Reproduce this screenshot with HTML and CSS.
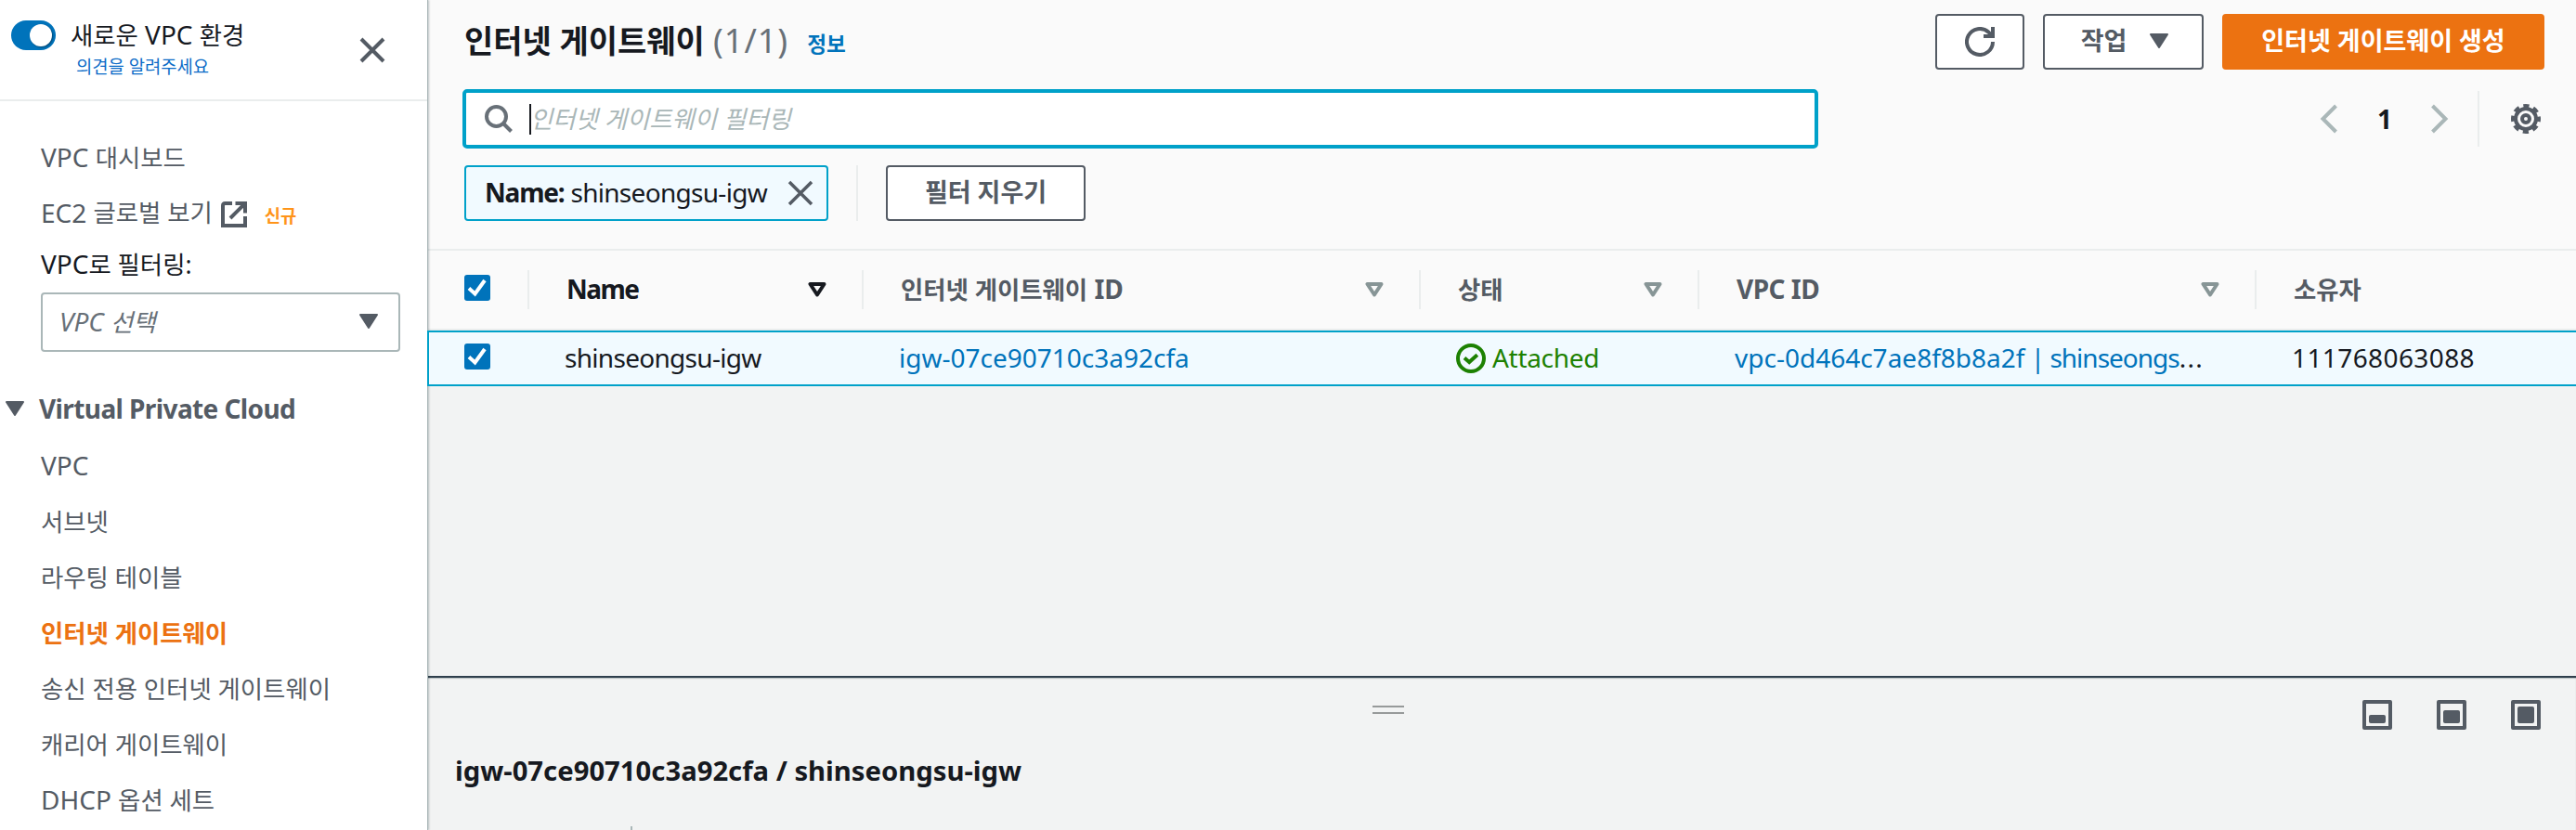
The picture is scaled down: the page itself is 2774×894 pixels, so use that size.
FILE: index.html
```html
<!DOCTYPE html>
<html lang="ko">
<head>
<meta charset="utf-8">
<title>인터넷 게이트웨이 | VPC</title>
<link rel="stylesheet" href="styles.css">
</head>
<body>
<div class="app">
  <aside class="sidebar">
    <header class="side-head">
      <span class="toggle"><span class="knob"></span></span>
      <div class="side-title">
        <div class="exp"><i class="ko">새로운</i> VPC <i class="ko">환경</i></div>
        <a class="feedback ko">의견을 알려주세요</a>
      </div>
      <svg class="close" viewBox="0 0 28 28" width="28" height="28"><path d="M2 2L26 26M26 2L2 26"/></svg>
    </header>
    <nav class="nav">
      <a class="item">VPC <i class="ko">대시보드</i></a>
      <a class="item ec2">EC2 <i class="ko">글로벌 보기</i>
        <svg class="ext" viewBox="0 0 28 28" width="28" height="28"><path d="M12 2H4.500Q2 2 2 4.500V25.900H26V16M15.500 2H26V12.500M25 3L10 18"/></svg>
        <b class="new ko">신규</b></a>
      <div class="filter-label">VPC<i class="ko">로 필터링:</i></div>
      <div class="select"><em>VPC <i class="ko">선택</i></em>
        <svg viewBox="0 0 20 16" width="20" height="16"><path class="tri" d="M1 1H19L10 15Z"/></svg></div>
      <div class="section"><svg viewBox="0 0 20 16" width="20" height="16"><path class="tri" d="M1 1H19L10 15Z"/></svg><b>Virtual Private Cloud</b></div>
      <a class="item">VPC</a>
      <a class="item"><i class="ko">서브넷</i></a>
      <a class="item"><i class="ko">라우팅 테이블</i></a>
      <a class="item active"><i class="ko">인터넷 게이트웨이</i></a>
      <a class="item"><i class="ko">송신 전용 인터넷 게이트웨이</i></a>
      <a class="item"><i class="ko">캐리어 게이트웨이</i></a>
      <a class="item">DHCP <i class="ko">옵션 세트</i></a>
    </nav>
  </aside>
  <main class="main">
    <section class="toolbar">
      <div class="title-row">
        <h1><i class="ko">인터넷 게이트웨이</i> <span class="count">(1/1)</span></h1>
        <a class="info ko">정보</a>
        <div class="actions">
          <button class="btn refresh"><svg viewBox="0 0 32 32" width="32" height="32"><path d="M30 16A14 14 0 1 1 25.500 5.700L29 9.500M30 0V10H20"/></svg></button>
          <button class="btn work"><i class="ko">작업</i><svg viewBox="0 0 20 16" width="20" height="16"><path class="tri" d="M1 1H19L10 15Z"/></svg></button>
          <button class="btn primary"><i class="ko">인터넷 게이트웨이 생성</i></button>
        </div>
      </div>
      <div class="search-row">
        <div class="search">
          <svg viewBox="0 0 30 30" width="30" height="30"><circle cx="12.500" cy="12.500" r="10.500"/><path d="M20 20L28.500 28.500"/></svg>
          <span class="caret"></span><em class="ko">인터넷 게이트웨이 필터링</em>
        </div>
        <div class="pager">
          <svg class="chev" viewBox="0 0 20 32" width="20" height="32"><path d="M17.500 2L3.500 16L17.500 30"/></svg>
          <b>1</b>
          <svg class="chev" viewBox="0 0 20 32" width="20" height="32"><path d="M2.500 2L16.500 16L2.500 30"/></svg>
          <span class="rule"></span>
          <svg class="gear" viewBox="0 0 32 32" width="32" height="32"><circle cx="16" cy="16" r="11"/><circle class="teeth" cx="16" cy="16" r="14"/><circle cx="16" cy="16" r="4"/></svg>
        </div>
      </div>
      <div class="tag-row">
        <div class="tag"><b>Name:</b><span class="name">shinseongsu-igw</span><svg viewBox="0 0 28 28" width="28" height="28"><path d="M2 2L26 26M26 2L2 26"/></svg></div>
        <span class="rule"></span>
        <button class="btn clear"><i class="ko">필터 지우기</i></button>
      </div>
    </section>
    <section class="grid thead">
      <div class="cell pick"><svg class="check" viewBox="0 0 28 28" width="28" height="28"><rect width="28" height="28" rx="3"/><path d="M5 14.500L11.500 20.500L22 6"/></svg></div>
      <div class="cell dark"><b>Name</b><svg class="sort" viewBox="0 0 20 16" width="20" height="16"><path d="M2.500 2H17.500L10 13.500Z"/></svg></div>
      <div class="cell"><b><i class="ko">인터넷 게이트웨이</i> ID</b><svg class="sort" viewBox="0 0 20 16" width="20" height="16"><path d="M2.500 2H17.500L10 13.500Z"/></svg></div>
      <div class="cell"><b><i class="ko">상태</i></b><svg class="sort" viewBox="0 0 20 16" width="20" height="16"><path d="M2.500 2H17.500L10 13.500Z"/></svg></div>
      <div class="cell"><b class="vpc-id">VPC ID</b><svg class="sort" viewBox="0 0 20 16" width="20" height="16"><path d="M2.500 2H17.500L10 13.500Z"/></svg></div>
      <div class="cell"><b><i class="ko">소유자</i></b></div>
    </section>
    <section class="grid row">
      <div class="cell pick"><svg class="check" viewBox="0 0 28 28" width="28" height="28"><rect width="28" height="28" rx="3"/><path d="M5 14.500L11.500 20.500L22 6"/></svg></div>
      <div class="cell name">shinseongsu-igw</div>
      <div class="cell"><a class="link">igw-07ce90710c3a92cfa</a></div>
      <div class="cell status"><svg viewBox="0 0 32 32" width="32" height="32"><circle cx="16" cy="16" r="14"/><path d="M9 15.500L14.200 20L22.800 12.300"/></svg><span>Attached</span></div>
      <div class="cell"><a class="link">vpc-0d464c7ae8f8b8a2f<span class="vpc-name"> | shinseongs</span></a><span class="dots">...</span></div>
      <div class="cell owner">111768063088</div>
    </section>
    <section class="empty"></section>
    <section class="split">
      <div class="split-bar">
        <span class="handle"></span>
        <div class="sizes">
          <svg viewBox="0 0 32 32" width="32" height="32"><path d="M2 2H30V30H2Z"/><rect x="7" y="16" width="18" height="9" rx="2"/></svg>
          <svg viewBox="0 0 32 32" width="32" height="32"><path d="M2 2H30V30H2Z"/><rect x="7" y="11" width="18" height="14" rx="2"/></svg>
          <svg viewBox="0 0 32 32" width="32" height="32"><path d="M2 2H30V30H2Z"/><rect x="7" y="7" width="18" height="18" rx="2"/></svg>
        </div>
      </div>
      <h2>igw-07ce90710c3a92cfa / shinseongsu-igw</h2>
      <div class="tabs"><span class="tab-rule"></span></div>
    </section>
  </main>
</div>
</body>
</html>
```

FILE: styles.css
```css
* { box-sizing: border-box; }
body {
  margin: 0;
  font-family: "Noto Sans", "Noto Sans CJK KR", sans-serif;
  font-size: 28px;
  line-height: 40px;
  color: #16191f;
  background: #f2f3f3;
}
i { font-style: inherit; }
svg { display: block; fill: none; flex: none; }
i.ko { font-size: .943em; }
.app { display: flex; width: 2774px; height: 894px; overflow: hidden; white-space: nowrap; }

/* Sidebar */
.sidebar { width: 461px; flex: none; background: #fff; border-right: 1px solid #aab7b8; box-shadow: 1px 0 2px rgba(0,28,36,.25); position: relative; z-index: 1; }
.side-head { display: flex; height: 109px; border-bottom: 2px solid #eaeded; padding: 17px 45px 0 12px; }
.toggle { width: 48px; height: 32px; margin-top: 5px; border-radius: 16px; background: #0073bb; padding: 4px; display: flex; justify-content: flex-end; }
.knob { width: 24px; height: 24px; border-radius: 50%; background: #fff; box-shadow: 1px 1px 2px rgba(0,0,0,.4); }
.side-title { margin-left: 16px; flex: 1; }
.exp { height: 41px; line-height: 40px; }
.feedback { display: block; margin-left: 6px; font-size: 18.800px; line-height: 28px; color: #0b6bc7; }
.close { stroke: #545b64; stroke-width: 4; margin-top: 23px; }
.nav { padding: 41px 29px 0 44px; color: #545b64; display: flex; flex-direction: column; }
.item { height: 60px; line-height: 38px; }
.ec2 { display: flex; white-space: pre; align-items: flex-start; height: 56px; }
.ext { stroke: #545b64; stroke-width: 4; margin: 7px 19px 0 9px; }
.new { font-size: 18.800px; color: #ff9419; margin-top: 4px; }
.filter-label { color: #16191f; height: 49px; line-height: 36px; }
.select { height: 64px; border: 2px solid #aab7b8; border-radius: 4px; display: flex; justify-content: space-between; align-items: center; padding: 0 22px 2px 18px; color: #687078; }
.tri { fill: #545b64; stroke: #545b64; stroke-width: 2; stroke-linejoin: round; }
.section { display: flex; align-items: center; gap: 16px; margin: 41px 0 22px -38px; height: 40px; }
.section b { letter-spacing: -.6px; }
.active { color: #ec7211; font-weight: 700; }

/* Main toolbar */
.main { flex: 1; min-width: 0; display: flex; flex-direction: column; margin-left: -1px; }
.toolbar { height: 270px; background: #fafafa; border-bottom: 2px solid #eaeded; padding: 15px 34px 0 38px; }
.title-row { display: flex; height: 81px; padding-left: 2px; }
h1 { margin: 0; font-size: 36px; line-height: 60px; margin-top: -1px; }
.count { color: #687078; font-weight: 400; letter-spacing: 1px; }
.info { color: #0073bb; font-weight: 700; font-size: 22.600px; margin: 13px 0 0 20px; line-height: 40px; }
.actions { margin-left: auto; display: flex; gap: 20px; }
.btn { height: 60px; border: 2px solid #545b64; border-radius: 4px; background: #fff; color: #545b64; font: inherit; font-weight: 700; display: flex; align-items: center; justify-content: center; padding: 0 0 2px; flex: none; }
.btn i.ko { font-size: 27px; }
.refresh { width: 96px; padding: 0; }
.refresh svg { stroke: #545b64; stroke-width: 4; }
.work { width: 173px; gap: 25px; padding-left: 3px; }
.primary { width: 347px; background: #ec7211; border-color: #ec7211; color: #fff; }
.search-row { display: flex; justify-content: space-between; height: 82px; }
.search { width: 1460px; height: 64px; border: 4px solid #00a1c9; border-radius: 5px; background: #fff; display: flex; align-items: center; padding-left: 20px; color: #aab7b8; }
.search svg { stroke: #687078; stroke-width: 4; margin-right: 18px; }
.caret { width: 2px; height: 33px; background: #16191f; }
.search em { font-size: 26.400px; margin: -1px 0 0 -1px; }
.pager { display: flex; height: 64px; align-items: center; }
.chev { stroke: #aab7b8; stroke-width: 4; }
.pager b { width: 98px; text-align: center; margin-left: 1px; }
.rule { width: 2px; height: 60px; background: #eaeded; }
.pager .rule { margin: 0 34px 0 31px; }
.gear { stroke: #545b64; stroke-width: 4; margin-right: 4px; }
.teeth { stroke-dasharray: 6.200 4.796; stroke-dashoffset: 3.100; }
.tag-row { display: flex; padding-left: 2px; }
.tag { width: 392px; height: 60px; border: 2px solid #00a1c9; border-radius: 4px; background: #f1faff; display: flex; align-items: center; padding: 0 14px 2px 20px; }
.tag b { letter-spacing: -1.200px; margin-right: 7px; }
.tag svg { stroke: #545b64; stroke-width: 3.500; margin: 2px 0 0 auto; }
.name { letter-spacing: -.7px; }
.tag-row .rule { margin: 0 30px; }
.clear { width: 215px; }

/* Table */
.grid { display: grid; grid-template-columns: 110px 360px 600px 300px 600px 1fr; }
.cell { display: flex; align-items: center; padding: 0 0 2px 38px; }
.pick { padding-left: 40px; }
.check rect { fill: #0073bb; }
.check path { stroke: #fff; stroke-width: 4; }
.thead { height: 86px; background: #fafafa; border-bottom: 2px solid #eaeded; color: #545b64; align-items: center; }
.thead .cell { height: 42px; border-right: 2px solid #eaeded; justify-content: space-between; padding: 0 38px 2px 40px; }
.thead .cell:last-child { border: 0; }
.thead .pick svg { margin-top: -2px; }
.thead .sort { margin-top: 2px; }
.dark { color: #16191f; }
.dark b { letter-spacing: -1.500px; }
.vpc-id { letter-spacing: -.5px; }
.sort { stroke: #879596; stroke-width: 4; stroke-linejoin: round; }
.dark .sort { stroke: #16191f; }
.row { height: 60px; border: 2px solid #00a1c9; border-right: 0; background: #f1faff; position: relative; z-index: 2; grid-template-columns: 108px 360px 600px 300px 600px 1fr; }
.row .pick { padding: 0 0 4px 38px; }
.link { color: #0073bb; }
.vpc-name { letter-spacing: -1px; }
.dots { letter-spacing: 1.200px; }
.owner { letter-spacing: .4px; }
.status { color: #1d8102; gap: 7px; }
.status span { letter-spacing: -.3px; }
.status svg { stroke: #1d8102; stroke-width: 4; margin-top: 2px; }
.empty { flex: 1; }

/* Split panel */
.split { height: 166px; border-top: 2px solid #2f3f4c; box-shadow: inset 0 1px 1px rgba(0,28,36,.25); }
.split-bar { display: flex; height: 80px; padding: 24px 38px 0 1018px; justify-content: space-between; }
.handle { width: 34px; height: 9px; margin-top: 6px; border: solid #979a9a; border-width: 2px 0; }
.sizes { display: flex; gap: 48px; }
.sizes path { stroke: #545b64; stroke-width: 4; stroke-linejoin: round; }
.sizes rect { fill: #545b64; }
h2 { margin: 0; padding-left: 30px; font-size: 29.250px; line-height: 40px; height: 80px; }
.tabs { height: 4px; padding-left: 219px; }
.tab-rule { display: block; width: 2px; height: 4px; background: #aab7b8; }
```
